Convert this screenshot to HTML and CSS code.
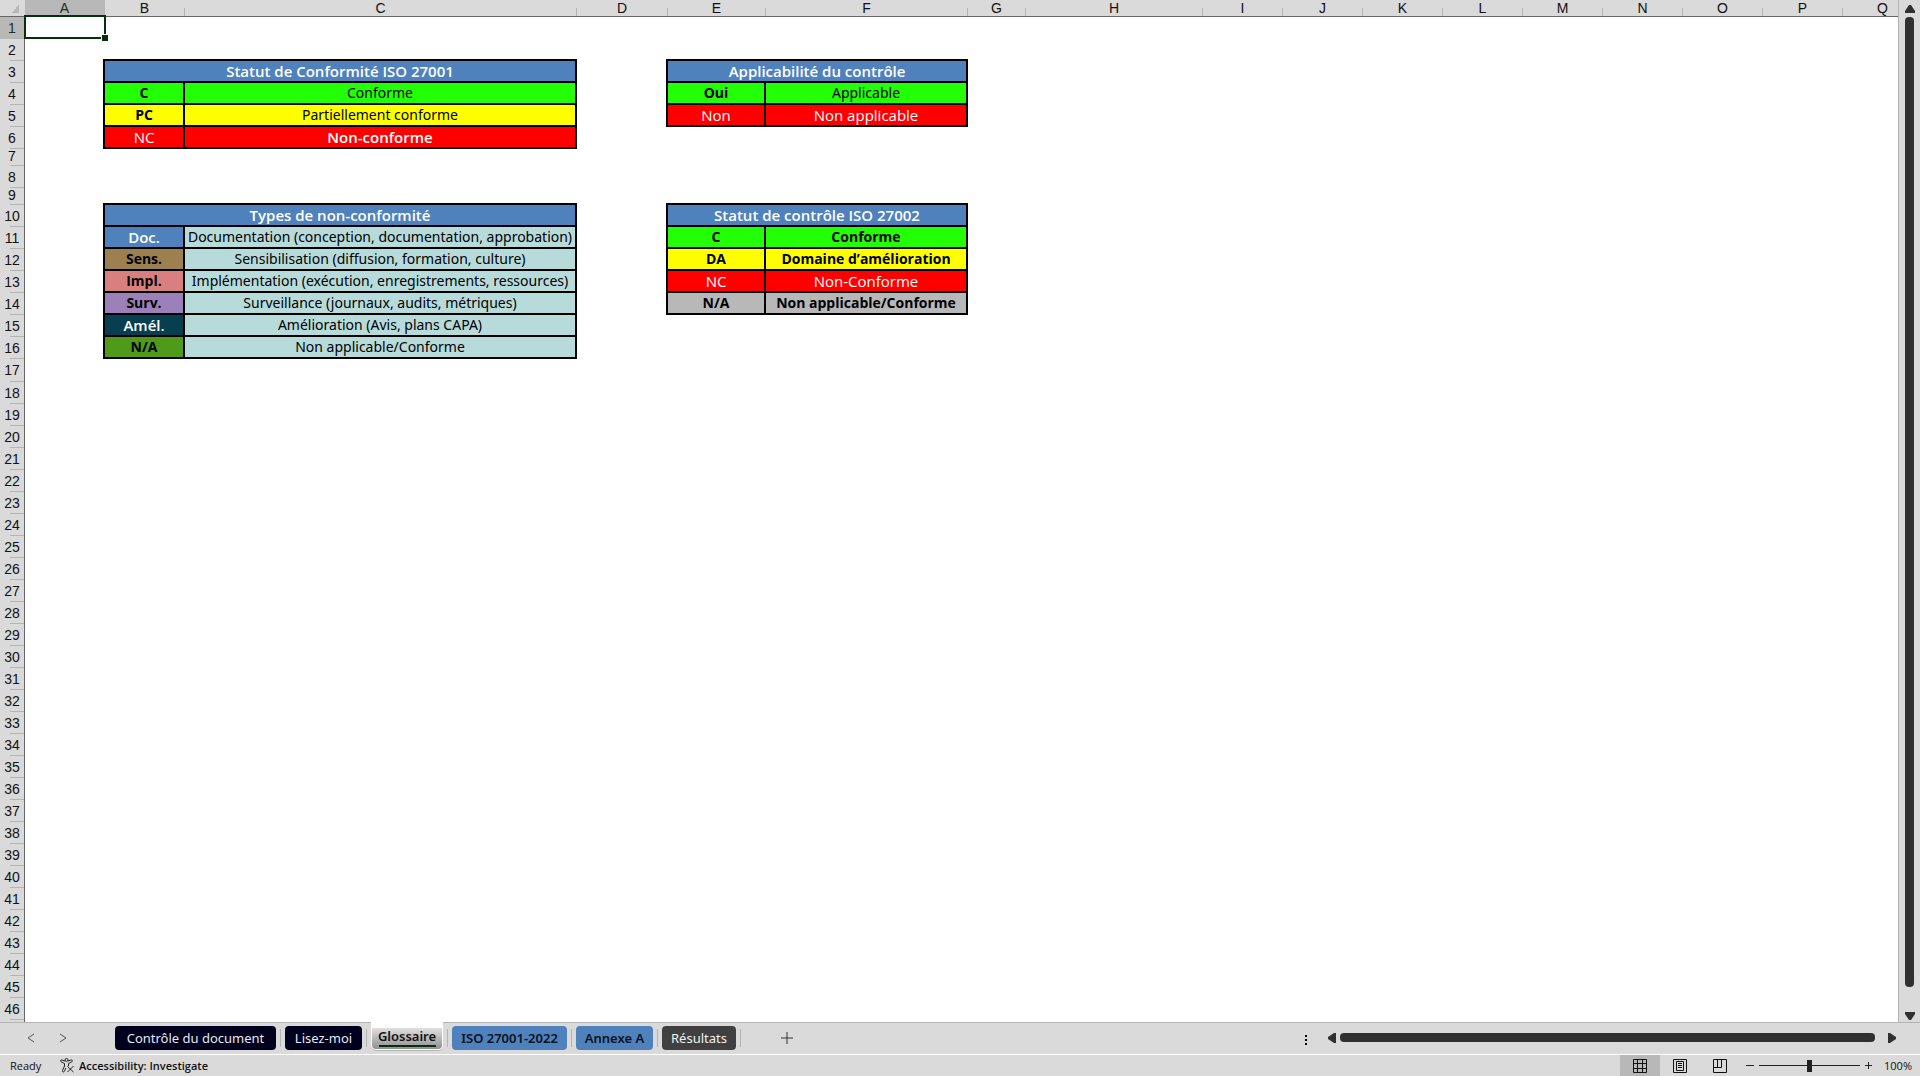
FILE: index.html
```html
<!DOCTYPE html>
<html lang="fr">
<head>
<meta charset="utf-8">
<title>Glossaire</title>
<link rel="stylesheet" href="styles.css">
</head>
<body>
<main class="workspace">
  <div class="sheet">
    <table class="grid">
      <colgroup>
        <col class="w-head"><col class="w-std"><col class="w-std"><col class="w-c"><col class="w-d"><col class="w-e"><col class="w-f"><col class="w-g"><col class="w-h"><col class="w-std"><col class="w-std"><col class="w-std"><col class="w-std"><col class="w-std"><col class="w-std"><col class="w-std"><col class="w-std"><col class="w-std"><col>
      </colgroup>
      <thead>
        <tr><td class="corner"></td><th class="active">A</th><th>B</th><th>C</th><th>D</th><th>E</th><th>F</th><th>G</th><th>H</th><th>I</th><th>J</th><th>K</th><th>L</th><th>M</th><th>N</th><th>O</th><th>P</th><th>Q</th><th></th></tr>
      </thead>
      <tbody>
        <tr><th class="active">1</th><td class="selected"><span class="cursor"></span></td><td colspan="17"></td></tr>
        <tr><th>2</th><td class="joint"></td><td colspan="2" class="edge"></td><td class="joint"></td><td colspan="2" class="edge"></td><td colspan="12"></td></tr>
        <tr><th>3</th><td class="side"></td><td colspan="2" class="cell title">Statut de Conformité ISO 27001</td><td class="side"></td><td colspan="2" class="cell title">Applicabilité du contrôle</td><td colspan="12"></td></tr>
        <tr><th>4</th><td class="side"></td><td class="cell green strong">C</td><td class="cell green">Conforme</td><td class="side"></td><td class="cell green strong">Oui</td><td class="cell green">Applicable</td><td colspan="12"></td></tr>
        <tr><th>5</th><td class="side"></td><td class="cell yellow strong">PC</td><td class="cell yellow">Partiellement conforme</td><td class="side"></td><td class="cell red">Non</td><td class="cell red medium">Non applicable</td><td colspan="12"></td></tr>
        <tr><th>6</th><td class="side"></td><td class="cell red medium">NC</td><td class="cell red semi">Non-conforme</td><td colspan="15"></td></tr>
        <tr class="short"><th>7</th><td colspan="18"></td></tr>
        <tr><th>8</th><td colspan="18"></td></tr>
        <tr class="short"><th>9</th><td class="joint"></td><td colspan="2" class="edge"></td><td class="joint"></td><td colspan="2" class="edge"></td><td colspan="12"></td></tr>
        <tr><th>10</th><td class="side"></td><td colspan="2" class="cell title">Types de non-conformité</td><td class="side"></td><td colspan="2" class="cell title">Statut de contrôle ISO 27002</td><td colspan="12"></td></tr>
        <tr><th>11</th><td class="side"></td><td class="cell title">Doc.</td><td class="cell pale">Documentation (conception, documentation, approbation)</td><td class="side"></td><td class="cell green strong">C</td><td class="cell green strong">Conforme</td><td colspan="12"></td></tr>
        <tr><th>12</th><td class="side"></td><td class="cell brown strong">Sens.</td><td class="cell pale">Sensibilisation (diffusion, formation, culture)</td><td class="side"></td><td class="cell yellow strong">DA</td><td class="cell yellow strong">Domaine d’amélioration</td><td colspan="12"></td></tr>
        <tr><th>13</th><td class="side"></td><td class="cell rose strong">Impl.</td><td class="cell pale">Implémentation (exécution, enregistrements, ressources)</td><td class="side"></td><td class="cell red">NC</td><td class="cell red">Non-Conforme</td><td colspan="12"></td></tr>
        <tr><th>14</th><td class="side"></td><td class="cell purple strong">Surv.</td><td class="cell pale">Surveillance (journaux, audits, métriques)</td><td class="side"></td><td class="cell gray strong">N/A</td><td class="cell gray strong">Non applicable/Conforme</td><td colspan="12"></td></tr>
        <tr><th>15</th><td class="side"></td><td class="cell teal semi">Amél.</td><td class="cell pale">Amélioration (Avis, plans CAPA)</td><td colspan="15"></td></tr>
        <tr><th>16</th><td class="side"></td><td class="cell moss strong">N/A</td><td class="cell pale">Non applicable/Conforme</td><td colspan="15"></td></tr>
        <tr class="tall"><th>17</th><td colspan="18"></td></tr>
        <tr><th>18</th><td colspan="18"></td></tr>
        <tr><th>19</th><td colspan="18"></td></tr>
        <tr><th>20</th><td colspan="18"></td></tr>
        <tr><th>21</th><td colspan="18"></td></tr>
        <tr><th>22</th><td colspan="18"></td></tr>
        <tr><th>23</th><td colspan="18"></td></tr>
        <tr><th>24</th><td colspan="18"></td></tr>
        <tr><th>25</th><td colspan="18"></td></tr>
        <tr><th>26</th><td colspan="18"></td></tr>
        <tr><th>27</th><td colspan="18"></td></tr>
        <tr><th>28</th><td colspan="18"></td></tr>
        <tr><th>29</th><td colspan="18"></td></tr>
        <tr><th>30</th><td colspan="18"></td></tr>
        <tr><th>31</th><td colspan="18"></td></tr>
        <tr><th>32</th><td colspan="18"></td></tr>
        <tr><th>33</th><td colspan="18"></td></tr>
        <tr><th>34</th><td colspan="18"></td></tr>
        <tr><th>35</th><td colspan="18"></td></tr>
        <tr><th>36</th><td colspan="18"></td></tr>
        <tr><th>37</th><td colspan="18"></td></tr>
        <tr><th>38</th><td colspan="18"></td></tr>
        <tr><th>39</th><td colspan="18"></td></tr>
        <tr><th>40</th><td colspan="18"></td></tr>
        <tr><th>41</th><td colspan="18"></td></tr>
        <tr><th>42</th><td colspan="18"></td></tr>
        <tr><th>43</th><td colspan="18"></td></tr>
        <tr><th>44</th><td colspan="18"></td></tr>
        <tr><th>45</th><td colspan="18"></td></tr>
        <tr><th>46</th><td colspan="18"></td></tr>
        <tr><th></th><td colspan="18"></td></tr>
      </tbody>
    </table>
  </div>
  <div class="vscroll">
    <button class="arrow" aria-label="Défiler vers le haut"><svg width="10" height="8" viewBox="0 0 10 8"><path d="M4 0h2l4 6v2H0V6z"/></svg></button>
    <div class="vthumb"></div>
    <button class="arrow" aria-label="Défiler vers le bas"><svg width="10" height="8" viewBox="0 0 10 8"><path d="M0 0h10v2L6 8H4L0 2z"/></svg></button>
  </div>
</main>
<nav class="tabbar">
  <div class="tabnav">
    <button aria-label="Feuille précédente"><svg width="8" height="10" viewBox="0 0 8 10"><path d="M7 1L1 5l6 4"/></svg></button>
    <button aria-label="Feuille suivante"><svg width="8" height="10" viewBox="0 0 8 10"><path d="M1 1l6 4-6 4"/></svg></button>
  </div>
  <div class="tabs">
    <button class="tab navy wide">Contrôle du document</button>
    <i class="sep"></i>
    <button class="tab navy">Lisez-moi</button>
    <i class="sep"></i>
    <button class="tab current"><span>Glossaire</span></button>
    <i class="sep"></i>
    <button class="tab blue iso">ISO 27001-2022</button>
    <i class="sep"></i>
    <button class="tab blue">Annexe A</button>
    <i class="sep"></i>
    <button class="tab dark">Résultats</button>
    <i class="sep"></i>
  </div>
  <button class="add" aria-label="Nouvelle feuille"><svg width="12" height="12" viewBox="0 0 12 12"><path d="M6 0v12M0 6h12"/></svg></button>
  <div class="hscroll">
    <svg class="dots" width="3" height="10" viewBox="0 0 3 10"><path d="M0 0h2v2H0zM0 4h2v2H0zM0 8h2v2H0z"/></svg>
    <button class="arrow" aria-label="Défiler à gauche"><svg width="8" height="10" viewBox="0 0 8 10"><path d="M8 0v10H6L0 6V4l6-4z"/></svg></button>
    <div class="hthumb"></div>
    <button class="arrow" aria-label="Défiler à droite"><svg width="8" height="10" viewBox="0 0 8 10"><path d="M0 0v10h2l6-4V4L2 0z"/></svg></button>
  </div>
</nav>
<footer class="status">
  <span class="ready">Ready</span>
  <button class="access">
    <svg width="15" height="15" viewBox="0 0 15 15"><circle cx="6.500" cy="2" r="1.500"/><path d="M5 3L2 2C.5 1.500 0 3.500 1.500 4L4.500 5.500V8L2.500 12.500c-.5 1.500 1 2 1.700 1L6 10M8 3l3-1c1.500-.5 2 1.500.5 2L8.500 5.500V8M7.500 8.500l6 5.500M13.500 8l-6 6"/></svg>
    Accessibility: Investigate
  </button>
  <div class="views">
    <button class="view on" aria-label="Normal"><svg width="14" height="14" viewBox="0 0 14 14"><path d="M.5.500h13v13H.5zM4.500 1v12M9.500 1v12M1 4.500h12M1 9.500h12"/></svg></button>
    <button class="view" aria-label="Mise en page"><svg width="14" height="14" viewBox="0 0 14 14"><path d="M.5.500h13v13H.5zM3.500 2.500h7v9h-7zM5 4.500h4M5 6.500h4M5 8.500h4"/></svg></button>
    <button class="view" aria-label="Aperçu des sauts de page"><svg width="14" height="14" viewBox="0 0 14 14"><path d="M.5.500h13v13H.5zM.5 8.500h8V.5M4.500 .5v8"/></svg></button>
  </div>
  <div class="zoom">
    <button aria-label="Zoom arrière"><svg width="8" height="8" viewBox="0 0 8 8"><path d="M0 3.500h8"/></svg></button>
    <input type="range" min="0" max="100" value="50" aria-label="Zoom">
    <button aria-label="Zoom avant"><svg width="8" height="8" viewBox="0 0 8 8"><path d="M0 3.500h7M3.500 0v7"/></svg></button>
    <output>100%</output>
  </div>
</footer>
</body>
</html>
```

FILE: styles.css
```css
* { box-sizing: border-box; }

body {
  margin: 0;
  height: 100vh;
  display: flex;
  flex-direction: column;
  overflow: hidden;
  background: #dadada;
  color: #111;
  font-family: "Open Sans", "Noto Sans", sans-serif;
}

button {
  margin: 0;
  padding: 0;
  border: 0;
  background: none;
  color: inherit;
  font: inherit;
  white-space: nowrap;
  display: flex;
  align-items: center;
  justify-content: center;
}

svg { display: block; }

/* Sheet */
.workspace {
  flex: 1;
  min-height: 0;
  display: flex;
}

.sheet {
  flex: 1;
  min-width: 0;
  overflow: hidden;
  background: #fff;
  border-right: 1px solid #b4b4b4;
}

.grid {
  width: 100%;
  table-layout: fixed;
  border-collapse: separate;
  border-spacing: 0;
}

.w-head { width: 25px; }
.w-std { width: 80px; }
.w-c { width: 392px; }
.w-d { width: 91px; }
.w-e { width: 98px; }
.w-f { width: 202px; }
.w-g { width: 58px; }
.w-h { width: 177px; }

.grid th,
.grid td {
  height: 22px;
  padding: 0;
  font-size: 14px;
  line-height: 16px;
  white-space: nowrap;
}

.grid th {
  font-family: "Liberation Sans", Arial, sans-serif;
  font-weight: 400;
  background: #dadada;
}

.grid thead th,
.grid .corner {
  height: 17px;
  padding-right: 1px;
  border-bottom: 1px solid #666;
  background: linear-gradient(#b4b4b4, #b4b4b4) right bottom / 1px 8px no-repeat #dadada;
}

.grid .corner {
  background: linear-gradient(135deg, #dadada 50%, #b8b8b8 50%) 11px 5px / 8px 8px no-repeat #dadada;
}

.grid tbody th {
  border-right: 1px solid #666;
  padding-bottom: 1px;
  background: linear-gradient(#b4b4b4, #b4b4b4) right bottom / 14px 1px no-repeat #dadada;
}

.grid thead .active,
.grid tbody .active {
  background-color: #b8b8b8;
  color: #12331a;
}

.grid .short th,
.grid .short td { height: 17px; }

.grid .short th {
  line-height: 12px;
  padding-bottom: 4px;
}

.grid .tall th,
.grid .tall td { height: 23px; }

.selected { position: relative; }

.cursor {
  position: absolute;
  inset: -2px -1px 0;
  border: 2px solid #06300c;
}

.cursor::after {
  content: "";
  position: absolute;
  right: -4px;
  bottom: -4px;
  width: 6px;
  height: 6px;
  background: #06300c;
  border-top: 1px solid #fff;
  border-left: 1px solid #fff;
}

.grid .edge { border-bottom: 2px solid #000; }
.grid .side { border-right: 2px solid #000; }
.grid .joint { background: linear-gradient(#000, #000) right bottom / 2px 2px no-repeat; }

.grid .cell {
  border-right: 2px solid #000;
  border-bottom: 2px solid #000;
  text-align: center;
  font-family: "Noto Sans", sans-serif;
  font-size: 14px;
  line-height: 20px;
  color: #000;
}

.grid .title,
.grid .red,
.grid .teal,
.grid .strong { font-family: "Open Sans", sans-serif; }

.grid .title,
.grid .red,
.grid .teal {
  font-size: 15px;
  color: #fff;
}

.grid .strong { font-weight: 700; }
.grid .medium { font-weight: 500; }
.grid .semi { font-weight: 600; }
.grid .title { background: #4f81bd; font-weight: 600; }
.grid .green { background: #22ff06; }
.grid .yellow { background: #ffff00; }
.grid .red { background: #ff0000; }
.grid .pale { background: #b7dbdb; }
.grid .brown { background: #9c8050; }
.grid .rose { background: #da7f7f; }
.grid .purple { background: #9b80ba; }
.grid .teal { background: #083f50; }
.grid .moss { background: #4f9a18; }
.grid .gray { background: #b8b8b8; }

/* Scroll bars */
.arrow { fill: #303030; }

.vscroll {
  width: 21px;
  padding: 5px 0 2px;
  display: flex;
  flex-direction: column;
  align-items: center;
}

.vthumb {
  width: 9px;
  flex: 1;
  margin: 4px 0 25px;
  border-radius: 4px;
  background: #303030;
}

.hscroll {
  width: 591px;
  margin-left: auto;
  padding-bottom: 2px;
  display: flex;
  align-items: center;
}

.dots { margin: 4px 20px 0 0; }

.hthumb {
  height: 9px;
  flex: 1;
  margin: 0 13px 0 4px;
  border-radius: 4px;
  background: #303030;
}

/* Sheet tabs */
.tabbar {
  height: 32px;
  padding-right: 24px;
  display: flex;
  border-top: 1px solid #b4b4b4;
}

.tabnav {
  width: 115px;
  padding: 0 48px 2px 27px;
  display: flex;
  justify-content: space-between;
  fill: none;
  stroke: #555;
}

.tabs { display: flex; }

.tab {
  width: 77px;
  height: 24px;
  margin-top: 3px;
  border-radius: 4px;
  font-family: "Noto Sans", sans-serif;
  font-size: 13px;
}

.wide { width: 161px; }
.iso { width: 115px; }
.navy { background: #00001e; color: #e4e8f4; }
.blue { background: #4f81bd; color: #0a1220; font-weight: 600; }
.dark { width: 74px; background: #404040; color: #f0f0f0; }

.current {
  height: 29px;
  width: 72px;
  margin-top: -1px;
  padding: 6px 1px 1px;
  background: #fff;
  border-bottom: 1px solid #b4b4b4;
  border-radius: 0 0 5px 5px;
  font-weight: 600;
}

.current span {
  height: 21px;
  width: 70px;
  line-height: 16px;
  background: linear-gradient(#06300c, #06300c) center 17px / 57px 2px no-repeat,
    linear-gradient(#e0e0e0, #909090);
  border-radius: 0 0 4px 4px;
}

.sep {
  width: 1px;
  height: 18px;
  margin: 6px 4px 0;
  background: #b4b4b4;
}

.add {
  margin-left: 36px;
  height: 30px;
  fill: none;
  stroke: #333;
}

/* Status bar */
.status {
  height: 22px;
  padding-right: 8px;
  display: flex;
  align-items: stretch;
  border-top: 1px solid #fff;
  font-size: 11px;
}

.ready {
  width: 60px;
  padding-left: 10px;
  line-height: 22px;
}

.access {
  gap: 4px;
  font-weight: 600;
}

.access svg {
  fill: none;
  stroke: #222;
}

.views {
  display: flex;
  margin-left: auto;
}

.view {
  width: 40px;
  fill: none;
  stroke: #111;
}

.on { background: #b8b8b8; }

.zoom {
  width: 172px;
  padding-left: 6px;
  display: flex;
  align-items: center;
  gap: 5px;
  fill: none;
  stroke: #222;
}

.zoom output {
  margin-left: auto;
}

.zoom input {
  appearance: none;
  width: 101px;
  height: 12px;
  margin: 0;
  background: linear-gradient(#222, #222) center / 100% 1px no-repeat;
}

.zoom input::-webkit-slider-thumb {
  appearance: none;
  width: 5px;
  height: 12px;
  background: #222;
}
```
